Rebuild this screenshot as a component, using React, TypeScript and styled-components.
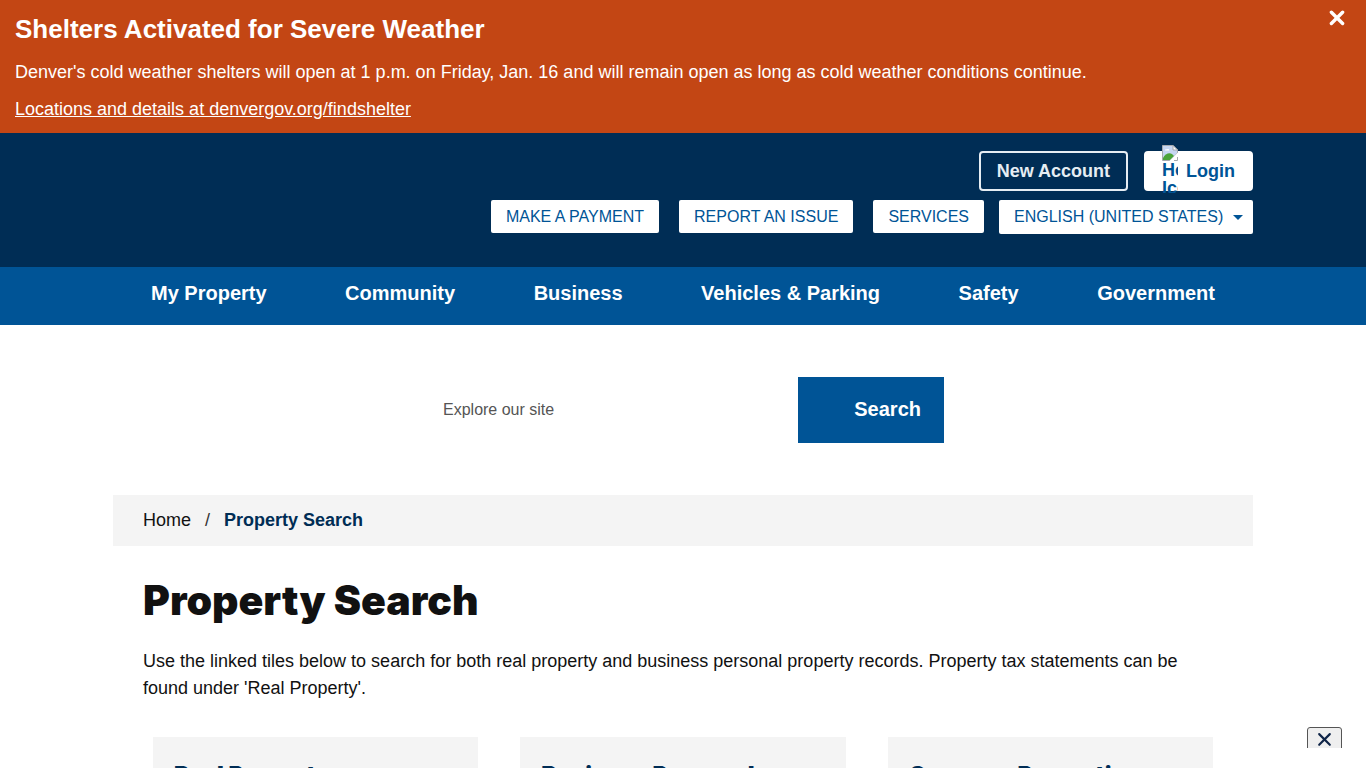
import React from 'react';
import styled, { createGlobalStyle } from 'styled-components';

const navy = '#002d55';
const blue = '#005496';

const GlobalStyle = createGlobalStyle`
  *, *::before, *::after { box-sizing: border-box; }
  html, body, #root { height: 100%; }
  body {
    margin: 0;
    overflow: hidden;
    background: #fff;
    color: #111;
    font-family: "Liberation Sans", Arial, sans-serif;
    font-size: 18px;
    line-height: 27px;
  }
  h1, h2, p, ul, ol { margin: 0; padding: 0; }
  ul, ol { list-style: none; }
  button, input, select { font: inherit; margin: 0; }
`;

const Page = styled.div`
  height: 100%;
  overflow: hidden;
`;

const Alert = styled.section`
  display: flex;
  justify-content: space-between;
  align-items: flex-start;
  padding: 10px 20px 10px 15px;
  background: #c34614;
  color: #fff;
`;

const AlertBody = styled.div`
  display: grid;
  gap: 10px;
`;

const AlertTitle = styled.h2`
  font-size: 26px;
  line-height: 39px;
`;

const AlertLink = styled.a`
  color: #fff;
`;

const AlertClose = styled.button`
  display: flex;
  padding: 0;
  border: 0;
  background: none;
  color: #fff;
`;

const Container = styled.div`
  max-width: 1140px;
  margin: 0 auto;
`;

const Header = styled.header`
  padding: 18px 0 33px;
  background: ${navy};
`;

const HeaderRow = styled.div<{ $gap: number }>`
  display: flex;
  justify-content: flex-end;
  gap: ${(p) => p.$gap}px;
  margin-bottom: 9px;
  &:last-child { margin-bottom: 0; }
`;

const AccountLink = styled.a<{ $filled?: boolean }>`
  display: flex;
  align-items: center;
  gap: 8px;
  height: 40px;
  padding: 0 16px;
  border: 2px solid ${(p) => (p.$filled ? '#fff' : '#e6edf3')};
  border-radius: 4px;
  background: ${(p) => (p.$filled ? '#fff' : 'transparent')};
  color: ${(p) => (p.$filled ? blue : '#e6edf3')};
  font-weight: 700;
  text-decoration: none;
`;

const MissingImage = styled.span`
  width: 16px;
  height: 48px;
  margin-bottom: 4px;
  overflow: hidden;
  line-height: 18px;
  svg { display: block; }
`;

const Shortcut = styled.a`
  height: 33px;
  padding: 0 15px;
  border-radius: 2px;
  background: #fff;
  color: ${blue};
  font-size: 16px;
  line-height: 33px;
  text-decoration: none;
`;

const Shortcuts = styled.div`
  display: flex;
  gap: 20px;
`;

const LanguageField = styled.div`
  display: flex;
  align-items: center;
  height: 34px;
  padding-right: 10px;
  border-radius: 2px;
  background: #fff;
  color: ${blue};
`;

const LanguageSelect = styled.select`
  height: 34px;
  padding: 0 9px 2px 15px;
  border: 0;
  background: none;
  color: ${blue};
  font-size: 16px;
  appearance: none;
`;

const Nav = styled.nav`
  height: 58px;
  background: ${blue};
`;

const NavList = styled.ul`
  display: flex;
  justify-content: space-between;
  padding: 11px 38px;
`;

const NavLink = styled.a`
  color: #fff;
  font-size: 20px;
  line-height: 30px;
  font-weight: 700;
  text-decoration: none;
  white-space: nowrap;
`;

const SearchForm = styled.form`
  display: flex;
  justify-content: center;
  max-width: 522px;
  margin: 52px auto;
`;

const SearchInput = styled.input`
  flex: 1;
  min-width: 0;
  height: 66px;
  padding: 0 21px;
  border: 0;
  background: #fff;
  font-size: 16px;
  &::placeholder { color: #555; opacity: 1; }
`;

const SearchButton = styled.button`
  width: 146px;
  height: 66px;
  padding: 0 23px 2px;
  border: 0;
  background: ${blue};
  color: #fff;
  font-size: 20px;
  font-weight: 700;
  text-align: right;
`;

const Breadcrumbs = styled.ol`
  display: flex;
  padding: 12px 30px;
  background: #f4f4f4;
`;

const Crumb = styled.li<{ $current?: boolean }>`
  color: ${(p) => (p.$current ? navy : '#111')};
  font-weight: ${(p) => (p.$current ? 700 : 400)};
  li + &::before {
    content: "/";
    margin: 0 14px;
    color: #333;
    font-weight: 400;
  }
  a { color: inherit; text-decoration: none; }
`;

const Content = styled.div`
  padding: 30px;
`;

const PageTitle = styled.h1`
  font-family: "Arial Black", Inter, sans-serif;
  font-size: 41px;
  line-height: 48px;
  font-weight: 900;
`;

const Intro = styled.p`
  margin: 24px 0 35px;
`;

const Tiles = styled.ul`
  display: grid;
  grid-template-columns: repeat(3, 1fr);
  gap: 42px;
  padding: 0 10px;
`;

const Tile = styled.li`
  min-height: 180px;
  padding: 21px;
  background: #f4f4f4;
`;

const TileLink = styled.a`
  color: ${navy};
  font-family: "Arial Black", Inter, sans-serif;
  font-size: 23px;
  line-height: 34px;
  font-weight: 900;
  text-decoration: none;
`;

const PopupFrame = styled.aside`
  position: fixed;
  right: 24px;
  bottom: 20px;
  height: 21px;
  overflow: hidden;
`;

const PopupClose = styled.button`
  display: flex;
  justify-content: center;
  width: 35px;
  height: 28px;
  padding: 4px 0 0;
  border: 1px solid #555;
  border-radius: 3px;
  background: #efefef;
  color: #0f2548;
`;

const Cross = ({ size, weight }: { size: number; weight: number }) => (
  <svg width={size} height={size} viewBox="0 0 16 16" fill="none" stroke="currentColor" strokeWidth={weight} strokeLinecap="round" aria-hidden="true">
    <path d="M3 2l10 10M13 2L3 12" />
  </svg>
);

const BrokenPicture = () => (
  <svg width="16" height="16" viewBox="0 0 16 16" aria-hidden="true">
    <path d="M.5.5h10.500l4.500 4.500v3L8.500 15.500h-8z" fill="#c6d6f2" stroke="#a5a9ad" />
    <path d="M1 15v-2c2-4 6-6 9-4l2 2-4 4z" fill="#4ca43a" />
    <path d="M3 5.500c0-1 1-1.500 2-1 1-1 2.500 0 2.300 1z" fill="#fff" />
    <path d="M11 .5V5h4.500z" fill="#fff" stroke="#a5a9ad" />
    <path d="M16 7.500V10l-5.500 6H7.500z" fill="#fff" />
    <path d="M12 15.500h3.500V12" fill="none" stroke="#a5a9ad" />
  </svg>
);

const shortcuts = ['Make a payment', 'Report an issue', 'Services'];
const sections = ['My Property', 'Community', 'Business', 'Vehicles & Parking', 'Safety', 'Government'];
const tiles = ['Real Property', 'Business Personal Property', 'Common Properties'];

export default function App() {
  return (
    <Page>
      <GlobalStyle />
      <Alert>
        <AlertBody>
          <AlertTitle>Shelters Activated for Severe Weather</AlertTitle>
          <p>Denver's cold weather shelters will open at 1 p.m. on Friday, Jan. 16 and will remain open as long as cold weather conditions continue.</p>
          <p><AlertLink href="#shelter">Locations and details at denvergov.org/findshelter</AlertLink></p>
        </AlertBody>
        <AlertClose type="button" aria-label="Close alert"><Cross size={18} weight={3} /></AlertClose>
      </Alert>
      <Header>
        <Container>
          <HeaderRow $gap={16}>
            <AccountLink href="#new-account">New Account</AccountLink>
            <AccountLink href="#login" $filled>
              <MissingImage><BrokenPicture />Home Icon</MissingImage>
              Login
            </AccountLink>
          </HeaderRow>
          <HeaderRow $gap={15}>
            <Shortcuts>
              {shortcuts.map((s) => <Shortcut key={s} href="#shortcut">{s.toUpperCase()}</Shortcut>)}
            </Shortcuts>
            <LanguageField>
              <LanguageSelect aria-label="Language">
                <option>ENGLISH (UNITED STATES)</option>
              </LanguageSelect>
              <svg width="10" height="5" viewBox="0 0 10 5" aria-hidden="true"><path d="M0 0h10L5 5z" fill="currentColor" /></svg>
            </LanguageField>
          </HeaderRow>
        </Container>
      </Header>
      <Nav aria-label="Main">
        <Container>
          <NavList>
            {sections.map((s) => <li key={s}><NavLink href="#section">{s}</NavLink></li>)}
          </NavList>
        </Container>
      </Nav>
      <SearchForm role="search">
        <SearchInput type="text" aria-label="Explore our site" placeholder="Explore our site" />
        <SearchButton type="button">Search</SearchButton>
      </SearchForm>
      <Container as="main">
        <Breadcrumbs>
          <Crumb><a href="#home">Home</a></Crumb>
          <Crumb $current>Property Search</Crumb>
        </Breadcrumbs>
        <Content>
          <PageTitle>Property Search</PageTitle>
          <Intro>Use the linked tiles below to search for both real property and business personal property records. Property tax statements can be found under 'Real Property'.</Intro>
          <Tiles>
            {tiles.map((t) => <Tile key={t}><TileLink href="#tile">{t}</TileLink></Tile>)}
          </Tiles>
        </Content>
      </Container>
      <PopupFrame>
        <PopupClose type="button" aria-label="Close"><Cross size={17} weight={2} /></PopupClose>
      </PopupFrame>
    </Page>
  );
}
